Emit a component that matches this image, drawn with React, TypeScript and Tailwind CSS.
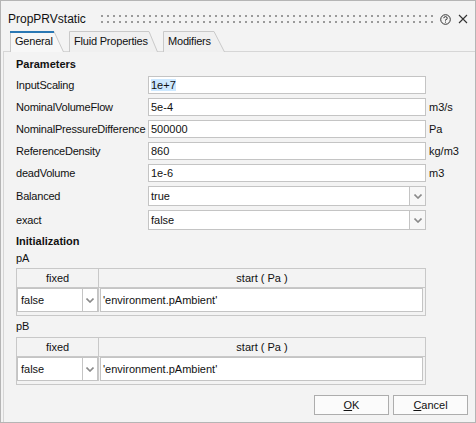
import React from "react";

const font = { fontFamily: '"Liberation Sans", Arial, sans-serif' };

function Chevron() {
  return (
    <svg width="8" height="5" viewBox="0 0 8 5">
      <path d="M0.5 0.5 L4 4 L7.5 0.5" fill="none" stroke="#8a8a8a" strokeWidth="1.6" />
    </svg>
  );
}

function Tab({ w, top, label, selected }: { w: number; top: number; label: string; selected?: boolean }) {
  return (
    <div className="relative h-[21px]" style={{ width: w }}>
      <svg className="absolute left-0 top-0" width={w} height={21} viewBox={`0 0 ${w} 21`}>
        <path
          d={`M0.5 21 L0.5 0.5 L${top} 0.5 L${w - 0.5} 21`}
          fill={selected ? "#f7f7f7" : "#f0f0f0"}
          stroke="#c9c9c9"
          strokeWidth="1"
        />
        {selected && <rect x="0" y="0" width={top} height="2" fill="#2a78b4" />}
      </svg>
      <span className="relative block pl-[5px] leading-[20px] text-[11px] tracking-[-0.2px] text-[#111]">{label}</span>
    </div>
  );
}

function Row({ label, value, unit, sel }: { label: string; value: React.ReactNode; unit?: string; sel?: boolean }) {
  return (
    <div className="flex h-[18px] items-center">
      <div className="w-[132px] text-[11px] tracking-[-0.2px] text-[#111]">{label}</div>
      <div className="h-[18px] w-[278px] border border-[#c4c4c4] bg-white pl-[2px] text-[11px] leading-[16px] text-[#111]">
        {sel ? <span className="bg-[#cce8ff]">{value}</span> : value}
      </div>
      {unit && <div className="ml-[3px] text-[11px] text-[#111]">{unit}</div>}
    </div>
  );
}

function Select({ label, value }: { label: string; value: string }) {
  return (
    <div className="flex h-[20px] items-center">
      <div className="w-[132px] text-[11px] tracking-[-0.2px] text-[#111]">{label}</div>
      <div className="flex h-[20px] w-[278px]">
        <div className="h-full flex-1 border border-[#c4c4c4] bg-white pl-[2px] text-[11px] leading-[18px] text-[#111]">{value}</div>
        <div className="flex h-full w-[16px] items-center justify-center border border-l-0 border-[#c4c4c4] bg-[#f7f7f7]">
          <Chevron />
        </div>
      </div>
    </div>
  );
}

function Table() {
  return (
    <div className="flex h-[48px] w-[410px] flex-col border border-[#c8c8c8] bg-[#f3f3f3]">
      <div className="flex h-[19px] border-b border-[#c8c8c8] text-[11px] leading-[18px] text-[#111]">
        <div className="w-[82px] border-r border-[#c8c8c8] text-center">fixed</div>
        <div className="flex-1 text-center">start ( Pa )</div>
      </div>
      <div className="flex h-[24px]">
        <div className="flex h-full w-[82px] border-r border-[#c8c8c8]">
          <div className="h-full w-[66px] border border-[#c4c4c4] bg-white pl-[3px] text-[11px] leading-[22px] text-[#111]">false</div>
          <div className="flex h-full w-[15px] items-center justify-center border border-l-0 border-[#c4c4c4] bg-white">
            <Chevron />
          </div>
        </div>
        <div className="ml-[1px] h-full w-[323px] border border-[#c4c4c4] bg-white pl-[2px] text-[11px] leading-[22px] text-[#111]">
          'environment.pAmbient'
        </div>
      </div>
    </div>
  );
}

export default function App() {
  return (
    <div style={font} className="flex h-[423px] w-[476px] flex-col border border-[#b5b5b5] bg-[#f3f3f3]">
      <div className="flex h-[30px] items-center pl-[7px] pt-[6px]">
        <span className="text-[12px] text-[#111]">PropPRVstatic</span>
        <svg className="ml-[15px]" width="332" height="8" viewBox="0 0 332 8">
          <defs>
            <pattern id="dots" width="6" height="6" patternUnits="userSpaceOnUse">
              <rect x="0" y="0" width="2" height="2" fill="#9a9a9a" />
            </pattern>
          </defs>
          <rect x="0" y="0" width="332" height="8" fill="url(#dots)" />
        </svg>
        <svg className="ml-[7px]" width="11" height="11" viewBox="0 0 11 11">
          <circle cx="5.5" cy="5.5" r="4.8" fill="none" stroke="#333" strokeWidth="1" />
          <path d="M3.8 4.2 A1.7 1.6 0 1 1 5.5 5.8 L5.5 6.6" fill="none" stroke="#333" strokeWidth="1" />
          <rect x="5" y="7.6" width="1" height="1" fill="#333" />
        </svg>
        <svg className="ml-[7px]" width="10" height="10" viewBox="0 0 10 10">
          <path d="M1 1 L9 9 M9 1 L1 9" stroke="#333" strokeWidth="1.1" />
        </svg>
      </div>
      <div className="relative z-10 ml-[9px] flex h-[20px] gap-[5px]">
        <Tab w={54} top={44} label="General" selected />
        <Tab w={89} top={80} label="Fluid Properties" />
        <Tab w={62} top={51} label="Modifiers" />
      </div>
      <div className="ml-[2px] flex flex-1 flex-col border-l border-t border-[#d6d6d6] pl-[12px] pt-[6px]">
        <div className="h-[13px] text-[11px] font-bold leading-[13px] text-[#111]">Parameters</div>
        <div className="mt-[5px] flex flex-col gap-[4px]">
          <Row label="InputScaling" value="1e+7" sel />
          <Row label="NominalVolumeFlow" value="5e-4" unit="m3/s" />
          <Row label="NominalPressureDifference" value="500000" unit="Pa" />
          <Row label="ReferenceDensity" value="860" unit="kg/m3" />
          <Row label="deadVolume" value="1e-6" unit="m3" />
        </div>
        <div className="mt-[4px] flex flex-col gap-[4px]">
          <Select label="Balanced" value="true" />
          <Select label="exact" value="false" />
        </div>
        <div className="mt-[5px] h-[13px] text-[11px] font-bold leading-[13px] text-[#111]">Initialization</div>
        <div className="mt-[4px] h-[13px] text-[11px] leading-[13px] text-[#111]">pA</div>
        <div className="mt-[3px]">
          <Table />
        </div>
        <div className="mt-[4px] h-[13px] text-[11px] leading-[13px] text-[#111]">pB</div>
        <div className="mt-[4px]">
          <Table />
        </div>
        <div className="mr-[7px] mt-[10px] flex justify-end gap-[4px]">
          <button className="h-[20px] w-[75px] border border-[#adadad] bg-[#fbfbfb] text-[11px] text-[#111]">
            <span className="underline">O</span>K
          </button>
          <button className="h-[20px] w-[75px] border border-[#adadad] bg-[#fbfbfb] text-[11px] text-[#111]">
            <span className="underline">C</span>ancel
          </button>
        </div>
      </div>
    </div>
  );
}
